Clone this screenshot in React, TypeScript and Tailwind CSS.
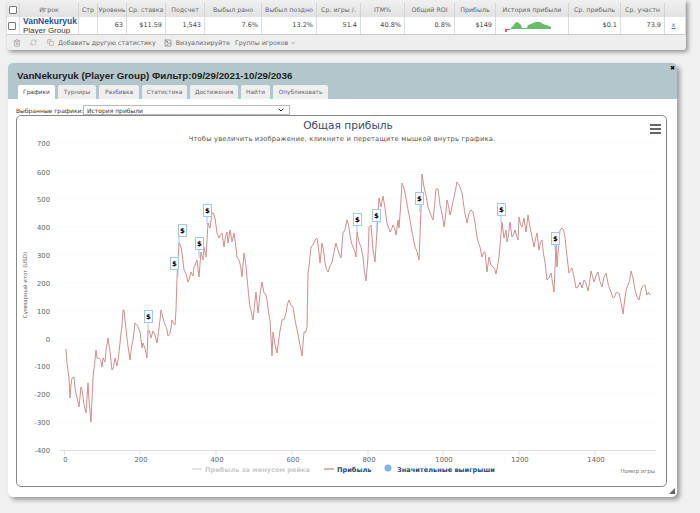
import React from 'react';
import { Trash2, RefreshCw, Copy, Image, ChevronDown } from 'lucide-react';

const font = 'font-["DejaVu_Sans",sans-serif]';

const columns = [
  { name: '', width: 13 },
  { name: 'Игрок', width: 59 },
  { name: 'Стр', width: 19 },
  { name: 'Уровень', width: 29, value: '63' },
  { name: 'Ср. ставка', width: 39, value: '$11.59' },
  { name: 'Подсчет', width: 39, value: '1,543' },
  { name: 'Выбыл рано', width: 57, value: '7.6%' },
  { name: 'Выбыл поздно', width: 55, value: '13.2%' },
  { name: 'Ср. игры /.', width: 44, value: '51.4' },
  { name: 'ITM%', width: 44, value: '40.8%' },
  { name: 'Общий ROI', width: 50, value: '0.8%' },
  { name: 'Прибыль', width: 41, value: '$149' },
  { name: 'История прибыли', width: 73 },
  { name: 'Ср. прибыль', width: 52, value: '$0.1' },
  { name: 'Ср. участн', width: 44, value: '73.9' },
  { name: '', width: 21 },
];

const tabs = [
  { name: 'Графики', width: 37, active: true },
  { name: 'Турниры', width: 38 },
  { name: 'Разбивка', width: 40 },
  { name: 'Статистика', width: 45 },
  { name: 'Достижения', width: 48 },
  { name: 'Найти', width: 29 },
  { name: 'Опубликовать', width: 55 },
];

const traced: number[][] = [
  [66,349],[67,363],[69,378],[70,398],[71,385],[72,378],[74,377],[75,388],[79,407],[81,387],[82,390],[86,413],[88,383],[89,400],[91,422],[93,377],[96,350],[97,358],[99,358],[102,367],[103,358],[105,362],[106,350],[108,338],[112,370],[115,358],[117,366],[120,343],[122,325],[123,310],[124,310],[125,320],[130,360],[133,340],[135,323],[140,332],[142,348],[143,343],[147,358],[148,330],[151,338],[153,331],[157,343],[160,320],[161,310],[163,318],[165,325],[168,336],[171,328],[172,320],[175,325],[176,310],
  [177,277],[179,243],[182,253],[184,270],[188,282],[191,272],[193,276],[194,267],[195,265],[197,260],[199,277],[201,252],[203,260],[204,247],[206,257],[208,223],[210,228],[212,213],[215,218],[217,233],[219,238],[222,233],[224,247],[227,232],[228,243],[230,230],[232,242],[234,233],[237,257],[239,260],[242,277],[244,253],[247,277],[250,307],[253,320],[256,292],[258,313],[262,282],[264,293],[267,300],[270,320],[272,356],[273,332],[277,353],[282,320],[286,313],[289,300],[293,307],[295,320],[300,345],[302,356],[304,332],[307,327],[308,273],[311,247],[313,245],[315,240],[317,238],[320,263],[322,243],[325,263],[328,272],[332,262],[336,243],[341,258],[343,233],[347,220],[350,235],
  [353,247],[356,257],[357,232],[359,242],[363,257],[366,281],[368,257],[369,227],[371,225],[373,250],[375,262],[377,230],[379,198],[381,207],[383,196],[387,223],[390,232],[393,225],[396,235],[398,220],[399,228],[402,183],[405,193],[410,220],[415,247],[419,260],[421,210],[422,174],[424,187],[428,207],[433,220],[436,189],[438,189],[440,205],[444,227],[447,200],[450,215],[453,202],[457,182],[462,193],[467,223],[471,210],[473,212],[477,237],[480,247],[482,257],[485,252],[487,272],[489,257],[493,267],[496,274],[499,257],[502,222],[504,238],[506,230],[507,242],[510,222],[512,237],[515,230],[518,240],[519,217],[522,227],[524,218],[526,232],[528,215],[530,227],[534,247],[537,233],[539,250],[542,240],[545,262],[547,280],[551,273],[554,292],[556,245],[557,267],[560,230],[562,228],[565,237],[569,273],[572,268],[576,288],[580,282],[582,288],[584,280],[588,291],[591,271],[594,282],[598,272],[602,287],[606,273],[611,292],[613,298],[616,293],[619,293],[623,314],[625,297],[628,285],[631,271],[635,290],[639,300],[642,287],[645,285],[647,295],[650,295],
];

// the real line is noisier than the trace, so wiggle the long slopes a little
const profit = traced.flatMap((p, i) => {
  const next = traced[i + 1];
  if (!next || next[0] - p[0] < 3) return [p];
  const midY = (p[1] + next[1]) / 2 + 3 * Math.sin(i * 2.7);
  return [p, [(p[0] + next[0]) / 2, midY]];
});

// flag box left, top, then the point its tail lands on
const flags = [
  [144, 310, 148, 335],
  [170, 257, 178, 277],
  [178, 224, 179, 243],
  [195, 237, 199, 258],
  [203, 204, 207, 225],
  [353, 213, 357, 232],
  [372, 209, 377, 230],
  [415, 192, 420, 212],
  [497, 203, 501, 222],
  [551, 232, 555, 250],
];

const yTicks = [
  ['700', 143], ['600', 172], ['500', 199], ['400', 227], ['300', 255], ['200', 283],
  ['100', 311], ['0', 339], ['-100', 366], ['-200', 394], ['-300', 422], ['-400', 450],
] as [string, number][];

const xTicks = [
  ['0', 64.5], ['200', 140], ['400', 216], ['600', 292], ['800', 368], ['1000', 443], ['1200', 519], ['1400', 595],
] as [string, number][];

const Sparkline = () => (
  <svg viewBox="496 17 73 17" className="w-[73px] h-[17px] block shrink-0">
    <path d="M509 29 L514 29 L516 27 L518 25 L519 23 L521 22 L523 23 L525 25 L526 28 L531 28 L532 25 L535 24 L537 23 L540 22 L544 22 L547 24 L550 25 L553 26 L555 27 L555 29 Z" fill="#68bb68" />
    <path d="M509 29 L514 29 L514 30 L511 30 L511 32 L509 32 Z" fill="#c66" />
  </svg>
);

const Chart = () => (
  <svg viewBox="17 116 649 370" className="w-[649px] h-[370px] block" style={{ fontFamily: '"DejaVu Sans", sans-serif' }}>
    <text x="348" y="129" textAnchor="middle" fontSize="10.6" fill="#3a4a68">Общая прибыль</text>
    <text x="342" y="141" textAnchor="middle" fontSize="6.7" letterSpacing="0.2" fill="#555">Чтобы увеличить изображение, кликните и перетащите мышкой внутрь графика.</text>
    <rect x="650" y="124" width="11" height="2" fill="#666" />
    <rect x="650" y="128" width="11" height="2" fill="#666" />
    <rect x="650" y="132" width="11" height="2" fill="#666" />

    {yTicks.slice(0, -1).map(([label, y]) => (
      <line key={label} x1="59" x2="656" y1={y} y2={y} stroke="#eeeeee" strokeWidth="1" strokeDasharray="1 3" />
    ))}
    {yTicks.map(([label, y]) => (
      <text key={label} x="50" y={y + 3} textAnchor="end" fontSize="6.8" fill="#666">{label}</text>
    ))}
    <line x1="60" x2="656" y1="450.5" y2="450.5" stroke="#d8dde8" />
    {xTicks.map(([label, x]) => (
      <g key={label}>
        <line x1={x} x2={x} y1="450" y2="455" stroke="#d8dde8" />
        <text x={x + 1} y="462" textAnchor="middle" fontSize="6.8" fill="#666">{label}</text>
      </g>
    ))}
    <text transform="translate(27 285) rotate(-90)" textAnchor="middle" fontSize="5.5" fill="#666">Суммарный итог (USD)</text>
    <text x="655" y="473" textAnchor="end" fontSize="5.5" fill="#777">Номер игры</text>

    <polyline points={profit.map((p) => p.join(',')).join(' ')} fill="none" stroke="#cd8f8f" strokeWidth="1" strokeLinejoin="round" />

    {flags.map(([x, y, tx, ty]) => (
      <g key={x}>
        <line x1={tx} y1={y + 12} x2={tx} y2={ty} stroke="#9cc8f2" />
        <rect x={x + 0.5} y={y + 0.5} width="8" height="12" fill="#fff" stroke="#9cc8f2" />
        <text x={x + 4.5} y={y + 9} textAnchor="middle" fontSize="7" fontWeight="700" fill="#000">$</text>
      </g>
    ))}

    <line x1="192" x2="202" y1="469" y2="469" stroke="#ddd" strokeWidth="1.5" />
    <text x="205" y="472" fontSize="6.6" fontWeight="700" fill="#ccc">Прибыль за минусом рейка</text>
    <line x1="324" x2="334" y1="469" y2="469" stroke="#d49a9a" strokeWidth="1.5" />
    <text x="337" y="472" fontSize="6.6" fontWeight="700" fill="#274b73">Прибыль</text>
    <circle cx="388" cy="468" r="3.5" fill="#7cb5ec" />
    <text x="397" y="472" fontSize="6.6" fontWeight="700" fill="#274b73">Значительные выигрыши</text>
  </svg>
);

export default function App() {
  return (
    <div className={`w-[700px] h-[513px] overflow-hidden bg-[#f0f0f0] ${font}`}>
      {/* stats table */}
      <div className="ml-[7px] w-[679px] h-[50px] bg-[#eeeeee] shadow-[2px_2px_4px_rgba(0,0,0,0.4)] rounded-b-[3px]">
        <div className="flex h-[17px] pt-[3px] bg-gradient-to-b from-[#f0f0f0] to-[#e2e2e2]">
          {columns.map((c, i) => (
            <div key={i} style={{ width: c.width }} className="shrink-0 overflow-hidden whitespace-nowrap border-r border-[#d4d4d4] flex items-center justify-center text-[6.3px] text-[#666]">
              {i === 0 ? <span className="w-[8px] h-[8px] border border-[#777] bg-white rounded-[1px]" /> : c.name}
            </div>
          ))}
        </div>
        <div className="flex h-[18px] bg-white border-b border-[#ccc]">
          {columns.map((c, i) => (
            <div key={i} style={{ width: c.width }} className="shrink-0 overflow-hidden whitespace-nowrap border-r border-[#ddd] flex items-center justify-end text-[6.5px] text-[#444] pr-[3px]">
              {i === 0 && <span className="mx-auto w-[8px] h-[8px] border border-[#777] bg-white rounded-[1px]" />}
              {i === 1 && (
                <div className="w-full pl-[3px] leading-[9px] font-['Liberation_Sans',sans-serif]">
                  <div className="font-bold text-[#1f4f9f] text-[8.5px]">VanNekuryuk</div>
                  <div className="text-[#333] text-[8px]">Player Group</div>
                </div>
              )}
              {c.value}
              {i === 12 && <Sparkline />}
              {i === 15 && <span className="mx-auto text-[#3a6fb5] underline">x</span>}
            </div>
          ))}
        </div>
        <div className="flex items-center h-[15px] text-[6.3px] text-[#666]">
          <Trash2 size={8} className="ml-[6px] text-[#999]" />
          <RefreshCw size={7} className="ml-[9px] text-[#aaa]" />
          <Copy size={7} className="ml-[10px] text-[#999]" />
          <span className="ml-[4px]">Добавить другую статистику</span>
          <Image size={8} className="ml-[8px] text-[#777]" />
          <span className="ml-[4px]">Визуализируйте</span>
          <span className="ml-[5px]">Группы игроков</span>
          <ChevronDown size={6} className="ml-[2px]" />
        </div>
      </div>

      {/* profit panel */}
      <div className="relative ml-[8px] mt-[13px] w-[669px] h-[434px] bg-white rounded-[5px] shadow-[3px_3px_4px_rgba(0,0,0,0.35)]">
        <div className="h-[36px] bg-[#b3c6cc] rounded-t-[5px] px-[9px] flex flex-col justify-between">
          <div className="pt-[6px] text-[9.75px] leading-[13px] font-bold text-[#222] whitespace-nowrap font-['Liberation_Sans',sans-serif]">VanNekuryuk (Player Group) Фильтр:09/29/2021-10/29/2036</div>
          <div className="flex gap-[3px] ml-[1px]">
            {tabs.map((t) => (
              <div key={t.name} style={{ width: t.width }} className={`h-[14px] rounded-t-[2px] flex items-center justify-center text-[5.8px] whitespace-nowrap ${t.active ? 'bg-white text-[#444]' : 'bg-[#eef0f0] text-[#666]'}`}>
                {t.name}
              </div>
            ))}
          </div>
        </div>
        <div className="flex items-center h-[10px] mt-[6px] ml-[8px] text-[6px] text-[#333]">
          <span className="w-[67px] whitespace-nowrap">Выбранные графики:</span>
          <div className="w-[207px] h-[10px] border border-[#bbb] flex items-center justify-between px-[3px]">
            <span>История прибыли</span>
            <ChevronDown size={8} strokeWidth={3} className="text-[#222] mr-[1px]" />
          </div>
        </div>
        <div className="ml-[8px] w-[651px] h-[372px] border border-[#888] rounded-[5px] overflow-hidden">
          <Chart />
        </div>
        <span className="absolute right-[2px] top-[2px] text-[6px] leading-[6px] font-bold text-black">✖</span>
        <svg viewBox="0 0 6 6" className="absolute right-[2px] bottom-[3px] w-[6px] h-[6px]">
          <path d="M6 0 V6 H0 Z" fill="#666" />
        </svg>
      </div>
    </div>
  );
}
